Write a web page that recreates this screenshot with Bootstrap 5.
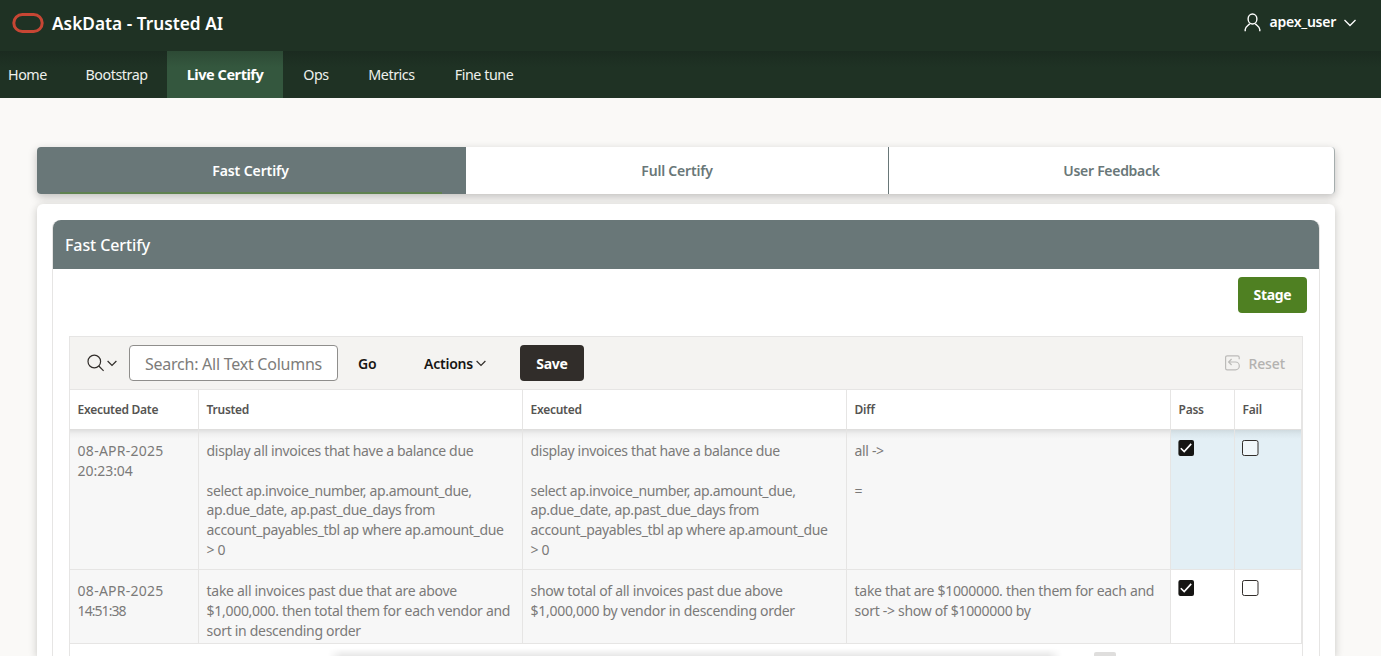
<!DOCTYPE html>
<html lang="en">
<head>
<meta charset="utf-8">
<meta name="viewport" content="width=device-width, initial-scale=1">
<title>AskData - Trusted AI</title>
<link href="https://cdn.jsdelivr.net/npm/bootstrap@5.3.0/dist/css/bootstrap.min.css" rel="stylesheet">
<style>
  html, body { height: 100vh; overflow: hidden; }
  body { background: #faf9f7; font-family: "Noto Sans", "Open Sans", sans-serif; font-size: 14px; color: #161513; }
  .topbar { height: 51px; background: #1f3224; padding: 0 25px 5px 12px; }
  .brand-name { font-size: 17.3px; font-weight: 600; color: #fff; letter-spacing: 0; margin: 2px 0 0 8px; line-height: 24px; }
  .user-name { font-size: 14px; font-weight: 600; letter-spacing: -.25px; margin: -1px 8px 1px 9px; }
  .menubar { height: 47px; background: linear-gradient(#1b2b20, #1f3224 16px); }
  .menubar .nav-link { padding: 0; color: #eef0ec; text-align: center; line-height: 47px; font-size: 14.3px; letter-spacing: -.45px; white-space: nowrap; }
  .menubar .nav-link.active { background: linear-gradient(#2d4a35, #34573e 16px); font-weight: 700; font-size: 14.5px; color: #fff; }
  .page-body { padding: 49px 46px 0 37px; }
  .tabs-box { height: 47px; border-radius: 4px; background: #fff; overflow: hidden; border-right: 1px solid #a5adad; }
  .tabs-wrap { border-radius: 4px; box-shadow: 0 3px 8px rgba(22,21,19,.25); }
  .tabs-box .nav-link { padding: 0; line-height: 47px; text-align: center; color: #697778; font-weight: 600; font-size: 14px; letter-spacing: -.3px; border-radius: 0; }
  .tabs-box .nav-link.active { color: #fff; letter-spacing: -.1px; }
  .tab-fast { width: 429px; background: #697778; padding-right: 2px; }
  .tab-line { height: 2px; margin: -2px 22px 0 23px; background: #5f8250; }
  .tab-full { width: 423px; border-right: 1px solid #697778; }
  .tab-full .nav-link { letter-spacing: -.2px !important; }
  .outer-panel { margin-top: 10px; height: 452px; border-radius: 6px 6px 0 0; background: #fff; padding: 16px 15px 0; box-shadow: 0 2px 8px rgba(22,21,19,.22); }
  .region { border: 1px solid #e6e5e4; border-width: 0 1px; height: 436px; border-radius: 8px 8px 0 0; }
  .region-head { height: 49px; margin: 0; padding: 0 12px; background: #697778; color: #fff; border-radius: 8px 8px 0 0; font-size: 16px; font-weight: 500; line-height: 50px; letter-spacing: -.1px; }
  .stage-row { padding: 8px 12px 0 0; }
  .btn-stage, .btn-stage:hover { width: 69px; height: 36px; background: #4f8022; color: #fff; font-weight: 700; font-size: 14px; letter-spacing: -.3px; padding: 0 0 2px; border: 0; border-radius: 4px; }
  .grid-box { margin: 23px 16px 0; border: 1px solid #e6e5e4; border-bottom: 0; height: 320px; overflow: hidden; }
  .grid-tools { height: 52px; background: #f4f3f1; padding: 0 17px; }
  .grid-tools b { font-weight: 600; letter-spacing: -.22px; }
  .go-btn { width: 18px; margin-left: 20px; }
  .actions-btn { width: 50px; margin-left: 48px; white-space: nowrap; }
  .search-field { width: 209px; height: 36px; border: 1px solid #8f8e8c; border-radius: 4px; padding: 1px 14px 0 15px; font-size: 16px; letter-spacing: -.25px; margin-left: 12px; }
  .search-field::placeholder { color: #7d7c7a; opacity: 1; }
  .btn-save, .btn-save:hover { width: 64px; height: 36px; padding: 0; border: 0; border-radius: 4px; background: #312d2a; color: #fff; font-weight: 700; font-size: 14px; letter-spacing: -.25px; margin-left: 34px; }
  .reset-btn { color: #b3b2b0; font-size: 14px; font-weight: 500; letter-spacing: -.1px; margin-left: 8px; }
  .grid-table { table-layout: fixed; width: 1232px; margin: 0; border-collapse: separate; border-spacing: 0; font-size: 14px; }
  .grid-table th { height: 41px; padding: 0 7.6px; font-size: 12px; font-weight: 600; color: #555452; border-top: 1px solid #e6e5e4; border-bottom: 1px solid #dfdedd; border-right: 1px solid #e6e5e4; line-height: 39px; background: #fff; letter-spacing: -.27px; }
  .grid-table td { vertical-align: top; padding: 11px 7.6px 0; line-height: 19.8px; color: #7b7a79; border-right: 1px solid #e6e5e4; border-bottom: 1px solid #e6e5e4; background: #f7f7f7; white-space: nowrap; overflow: hidden; letter-spacing: -.345px; }
  .grid-table .row-two td { letter-spacing: -.3px; }
  .grid-table .stamp { letter-spacing: .26px; }
  .grid-table .stamp-time { letter-spacing: -.05px; }
  .grid-table .stamp-late { letter-spacing: -.95px; }
  .row-one td { height: 140px; background: linear-gradient(#e0e0e0, #f0f0f0 4px, #f7f7f7 9px); }
  .row-one td.check-cell { background: linear-gradient(#cfdadf, #dbe7ed 4px, #e3eff5 9px); }
  .row-two td { height: 74px; }
  .row-two td.check-cell { background: #fff; }
  .check-cell svg { display: block; margin: -1px 0 0 -.6px; }
  .foot-shade { height: 8px; margin: 4px 0 0 258px; width: 734px; background: linear-gradient(rgba(0,0,0,0), rgba(0,0,0,.09)); -webkit-mask-image: linear-gradient(90deg, transparent, #000 14px, #000 720px, transparent); }
  .foot-thumb { width: 22px; height: 4px; margin: 8px 0 0 32px; background: #dfdedd; border-radius: 2px 2px 0 0; }
</style>
</head>
<body>
<svg class="d-none">
  <symbol id="caret" viewBox="0 0 10 7"><path d="M.6 1L5 5.400 9.400 1" fill="none" stroke="#312d2a" stroke-width="1.200"/></symbol>
  <symbol id="box-on" viewBox="0 0 17 16"><rect x=".4" width="15.600" height="16" rx="2" fill="#161513"/><path d="M2.800 8.200l3.400 3.300 7-7.600" fill="none" stroke="#fff" stroke-width="1.600"/></symbol>
  <symbol id="box-off" viewBox="0 0 17 16"><rect x=".5" y=".5" width="15.500" height="15" rx="1.800" fill="#fff" fill-opacity=".5" stroke="#312d2a"/></symbol>
</svg>
<header class="topbar d-flex align-items-center">
  <svg width="32" height="20" viewBox="0 0 32 20"><rect x="1.800" y="1.500" width="28.400" height="17" rx="8.500" fill="none" stroke="#c74634" stroke-width="3"/></svg>
  <span class="brand-name">AskData - Trusted AI</span>
  <div class="ms-auto d-flex align-items-center text-white" style="margin-bottom:1px">
    <svg width="17" height="19" viewBox="0 0 17 19" fill="none" stroke="#fff" stroke-width="1.400"><ellipse cx="8.500" cy="6" rx="4.400" ry="5"/><path d="M1.200 18.200v-1.800c0-2.400 2.200-3.400 4.600-5.600M15.800 18.200v-1.800c0-2.400-2.200-3.400-4.600-5.600"/></svg>
    <span class="user-name">apex_user</span>
    <svg width="12" height="8" viewBox="0 0 12 8" fill="none" stroke="#fff" stroke-width="1.300"><path d="M.5 1L6 6.500 11.500 1"/></svg>
  </div>
</header>
<nav class="menubar nav flex-nowrap">
  <a class="nav-link text-start ps-2" style="width:66px">Home</a>
  <a class="nav-link" style="width:101px">Bootstrap</a>
  <a class="nav-link active" style="width:116px">Live Certify</a>
  <a class="nav-link" style="width:66px">Ops</a>
  <a class="nav-link" style="width:85px">Metrics</a>
  <a class="nav-link" style="width:100px">Fine tune</a>
</nav>
<main class="page-body">
  <div class="tabs-wrap"><div class="tabs-box d-flex">
    <div class="tab-fast"><a class="nav-link active">Fast Certify</a><div class="tab-line"></div></div>
    <div class="tab-full"><a class="nav-link">Full Certify</a></div>
    <div class="flex-grow-1"><a class="nav-link">User Feedback</a></div>
  </div></div>
  <section class="outer-panel"><div class="region">
    <h2 class="region-head">Fast Certify</h2>
    <div class="stage-row d-flex justify-content-end"><button class="btn btn-stage">Stage</button></div>
    <div class="grid-box">
      <div class="grid-tools d-flex align-items-center">
        <svg width="18" height="18" viewBox="0 0 18 18" fill="none" stroke="#312d2a" stroke-width="1.200"><circle cx="7.300" cy="7.500" r="6.300"/><path d="M11.800 12l4.800 4.800"/></svg>
        <svg style="margin-left:2px" width="10" height="7"><use href="#caret"/></svg>
        <input class="search-field" placeholder="Search: All Text Columns">
        <b class="go-btn">Go</b>
        <b class="actions-btn">Actions</b>
        <svg style="margin-left:2px" width="10" height="7"><use href="#caret"/></svg>
        <button class="btn btn-save">Save</button>
        <svg class="ms-auto" width="15" height="16" viewBox="0 0 15 16" fill="none" stroke="#bcbbb9" stroke-width="1.200"><path d="M14.200 4.200V2.400A1.600 1.600 0 0 0 12.600.8H2.200A1.600 1.600 0 0 0 .6 2.400v10.800a1.600 1.600 0 0 0 1.600 1.600h8.200a3.900 3.900 0 0 0 0-7.800H4M6.600 4L3.600 7l3 3"/></svg>
        <span class="reset-btn">Reset</span>
      </div>
      <table class="grid-table">
        <colgroup><col style="width:129px"><col style="width:324px"><col style="width:324px"><col style="width:324px"><col style="width:64px"><col style="width:67px"></colgroup>
        <thead><tr><th>Executed Date</th><th>Trusted</th><th>Executed</th><th>Diff</th><th>Pass</th><th>Fail</th></tr></thead>
        <tbody>
          <tr class="row-one"><td><span class="stamp">08-APR-2025</span><br><span class="stamp-time">20:23:04</span></td>
            <td>display all invoices that have a balance due<br><br>select ap.invoice_number, ap.amount_due,<br>ap.due_date, ap.past_due_days from<br>account_payables_tbl ap where ap.amount_due<br>&gt; 0</td>
            <td>display invoices that have a balance due<br><br>select ap.invoice_number, ap.amount_due,<br>ap.due_date, ap.past_due_days from<br>account_payables_tbl ap where ap.amount_due<br>&gt; 0</td>
            <td>all -&gt;<br><br>=</td>
            <td class="check-cell"><svg width="17" height="16"><use href="#box-on"/></svg></td>
            <td class="check-cell"><svg width="17" height="16"><use href="#box-off"/></svg></td></tr>
          <tr class="row-two"><td><span class="stamp">08-APR-2025</span><br><span class="stamp-late">14:51:38</span></td>
            <td>take all invoices past due that are above<br>$1,000,000. then total them for each vendor and<br>sort in descending order</td>
            <td>show total of all invoices past due above<br>$1,000,000 by vendor in descending order</td>
            <td>take that are $1000000. then them for each and<br>sort -&gt; show of $1000000 by</td>
            <td class="check-cell"><svg width="17" height="16"><use href="#box-on"/></svg></td>
            <td class="check-cell"><svg width="17" height="16"><use href="#box-off"/></svg></td></tr>
        </tbody>
      </table>
      <div class="d-flex"><div class="foot-shade"></div><div class="foot-thumb"></div></div>
    </div>
  </div></section>
</main>
<script src="https://cdn.jsdelivr.net/npm/bootstrap@5.3.0/dist/js/bootstrap.bundle.min.js"></script>
</body>
</html>
